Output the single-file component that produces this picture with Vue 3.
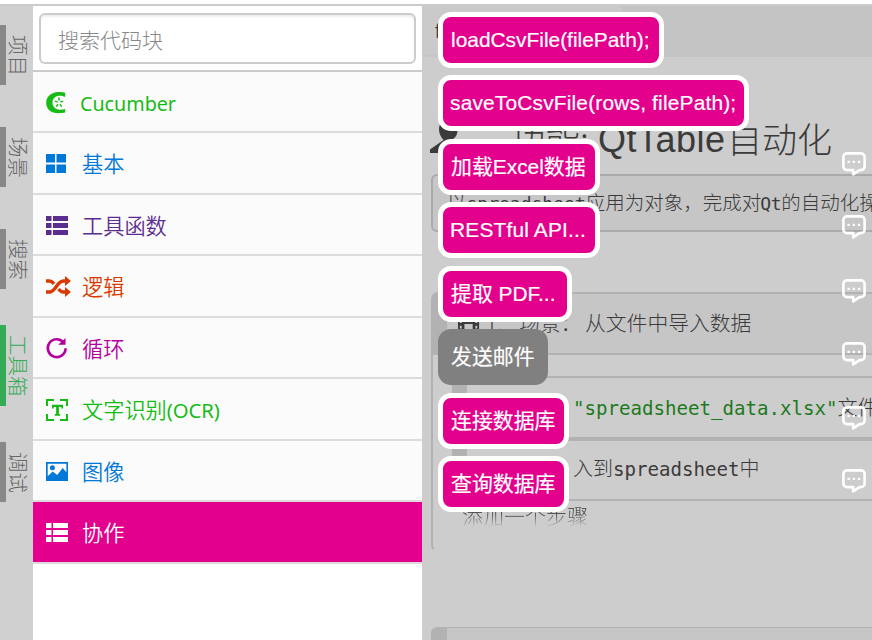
<script setup>
const tabs = [
  { label: '项目', size: 'wide' },
  { label: '场景', size: 'wide' },
  { label: '搜索' },
  { label: '工具箱', active: true },
  { label: '调试' },
]

const categories = [
  { label: 'Cucumber', icon: 'cucumber', color: '#16bb16', latin: true },
  { label: '基本', icon: 'grid', color: '#0078d7' },
  { label: '工具函数', icon: 'list', color: '#5c2d91' },
  { label: '逻辑', icon: 'shuffle', color: '#d83b01' },
  { label: '循环', icon: 'loop', color: '#b4009e' },
  { label: '文字识别', suffix: '(OCR)', icon: 'ocr', color: '#16bb16' },
  { label: '图像', icon: 'image', color: '#0078d7' },
  { label: '协作', icon: 'list', color: '#ffffff', selected: true },
]

const blocks = [
  { label: 'loadCsvFile(filePath);', width: 226 },
  { label: 'saveToCsvFile(rows, filePath);', width: 311, wide: true },
  { label: '加载Excel数据', width: 162, comment: true },
  { label: 'RESTful API...', width: 162, comment: true, wide: true },
  { label: '提取 PDF...', width: 134, comment: true },
  { label: '发送邮件', width: 110, comment: true, disabled: true },
  { label: '连接数据库', width: 131, comment: true },
  { label: '查询数据库', width: 131, comment: true },
]
</script>

<template>
  <div class="page">
    <nav class="rail">
      <div v-for="t in tabs" :key="t.label" class="tab" :class="[{ active: t.active }, t.size]">
        <span>{{ t.label }}</span>
      </div>
    </nav>

    <aside class="toolbox">
      <div class="search"><div class="field">搜索代码块</div></div>
      <div
        v-for="c in categories"
        :key="c.label"
        class="category"
        :class="{ selected: c.selected, latin: c.latin }"
        :style="{ color: c.color }"
      >
        <svg class="icon" viewBox="0 0 26 24" fill="currentColor">
          <template v-if="c.icon === 'cucumber'">
            <path d="M20.200 1.900C18.400 1.100 15.600 1 13.200 1.100 6 1.400 1.200 5.600 1.200 11.800c0 6.700 5 10.400 12 10.400 2.500 0 5.400-.2 7-.6v-3.600c-1.800.6-3.800.9-5.400.7-4.400-.4-7.300-3-7.300-7 0-4.300 3-7 7.300-7 1.700 0 3.800.5 5.400 1.200z" />
            <g fill="none" stroke="currentColor" stroke-width="1.500" stroke-linecap="round">
              <path d="M14 7v1.900M17.700 10.400l-1.800.5M16.300 15.200l-1-1.500M11.700 15.200l1-1.500M10.300 10.400l1.800.5" />
            </g>
          </template>
          <template v-else-if="c.icon === 'grid'">
            <path d="M1 2h9v8.500H1zM11.500 2h9.500v8.500h-9.500zM1 12.500h9V21H1zM11.500 12.500h9.500V21h-9.500z" />
          </template>
          <template v-else-if="c.icon === 'list'">
            <path d="M1 2h5.500v5H1zM8 2h15v5H8zM1 9h5.500v5H1zM8 9h15v5H8zM1 16h5.500v5H1zM8 16h15v5H8z" />
          </template>
          <template v-else-if="c.icon === 'shuffle'">
            <path fill="none" stroke="currentColor" stroke-width="3.400" d="M1 6h3.500c2 0 3 1 4.500 2.800M1 17h3.500c6 0 7.500-11 14-11H21M13.500 14c1.500 2 2.700 3 5 3H21" />
            <path d="M20 1l6 5-6 5zM20 12l6 5-6 5z" />
          </template>
          <template v-else-if="c.icon === 'loop'">
            <path fill="none" stroke="currentColor" stroke-width="2.600" d="M18.300 5.200A8.900 8.900 0 1 0 20.600 11.300" />
            <path d="M20.500 1v6.800h-7.300z" />
          </template>
          <template v-else-if="c.icon === 'ocr'">
            <path fill="none" stroke="currentColor" stroke-width="2" d="M9 2H2v6M15 2h7v6M9 22H2v-6M15 22h7v-6" />
            <path d="M7 6.800h11v3.700h-1.700V9h-2.400v7h1.300v1.700H9.800V16h1.300V9H8.700v1.500H7z" />
          </template>
          <template v-else>
            <path fill-rule="evenodd" d="M1 2h22v19H1zM2.700 3.700v12.500l5-4.700 4.500 3.500 5.500-7 3.700 4.200V3.700z" />
            <circle cx="7.400" cy="7.700" r="2.500" />
          </template>
        </svg>
        <span>{{ c.label }}<b v-if="c.suffix">{{ c.suffix }}</b></span>
      </div>
    </aside>

    <main class="editor">
      <div class="filetabs"><div class="filetab">f</div></div>
      <h1 class="title">
        <svg class="user" viewBox="0 0 30 34"><path fill="#3b3b3b" d="M9 9a9.300 9.300 0 0 1 18.600 0c0 5-1.500 8-4.500 10v2.500l6 3V33H0v-3.500l13.500-9.500C11 17 9 14 9 9z" /></svg>
        <span class="kw">功能:</span><span class="name">QtTable</span><span>自动化</span>
      </h1>
      <div class="description">以<i>spreadsheet</i>应用为对象，完成对<i class="qt">Qt</i>的自动化操作</div>
      <section class="scenario">
        <header>
          <svg class="film" viewBox="0 0 24 24"><path fill="#3b3b3b" fill-rule="evenodd" d="M0 1h23v22H0zM2 3v3h2V3zm0 6v3h2V9zm0 6v3h2v-3zM19 3v3h2V3zm0 6v3h2V9zm0 6v3h2v-3zM7 3v8h9V3zm0 10v8h9v-8z" /></svg>
          <span class="number">1.</span><span class="kind">场景：</span><span>从文件中导入数据</span>
        </header>
        <div class="step"><span class="lead">打开</span><q>"spreadsheet_data.xlsx"</q>文件</div>
        <div class="step second"><span class="lead">数据导</span>入到<i>spreadsheet</i>中</div>
        <div class="add">添加一个步骤</div>
      </section>
      <section class="next"></section>
    </main>

    <div class="flyout">
      <div v-for="b in blocks" :key="b.label" class="entry">
        <div class="block" :class="{ disabled: b.disabled, wide: b.wide }" :style="{ width: b.width + 'px' }">{{ b.label }}</div>
        <svg v-if="b.comment" class="comment" viewBox="0 0 24 24">
          <path fill="none" stroke="#fff" stroke-width="2.600" stroke-linejoin="round" d="M5 1.400h14a3.600 3.600 0 0 1 3.600 3.600v9.500a3.600 3.600 0 0 1-3.600 3.600h-1.500L11.200 22.300v-4.200H5a3.600 3.600 0 0 1-3.600-3.600V5A3.600 3.600 0 0 1 5 1.400z" />
          <path fill="#fff" d="M5.500 8.700h2.300v2.300H5.500zM10.700 8.700H13V11h-2.300zM15.900 8.700h2.300v2.300h-2.300z" />
        </svg>
      </div>
    </div>
  </div>
</template>

<style>
body { background: #fff; overflow: hidden; }
</style>

<style scoped>
.page {
  box-sizing: border-box;
  width: 872px;
  height: 640px;
  border-top: 4px solid #fff;
  display: flex;
  overflow: hidden;
  position: relative;
  background: #fff;
  font-family: "Liberation Sans", "Noto Sans CJK SC", sans-serif;
}
.page > * { box-sizing: border-box; border-top: 2px solid #cbcbcb; flex: none; }
.rail { width: 33px; padding-top: 19px; background: #d0d0d0; }
.tab {
  box-sizing: border-box;
  height: 60px;
  margin-bottom: 36px;
  border-left: 6px solid #888;
  color: #666;
  display: flex;
  align-items: center;
  padding-left: 1px;
  font: 300 20.5px/24px "Noto Sans CJK SC", sans-serif;
}
.tab.wide { margin-bottom: 42px; }
.tab.active { height: 81px; border-color: #35ab57; color: #35ab57; }
.tab span { writing-mode: vertical-rl; text-orientation: sideways; }

.toolbox { width: 389px; background: #fff; }
.search { box-sizing: border-box; height: 66px; padding: 7px 6px 6px; border-bottom: 2px solid #cbcbcb; }
.field {
  box-sizing: border-box;
  height: 51px;
  width: 377px;
  border: 2px solid #ccc;
  border-radius: 6px;
  padding-left: 17px;
  color: #888;
  font: 300 21px/49px "Noto Sans CJK SC", sans-serif;
  box-shadow: inset 0 2px 2px rgba(0, 0, 0, 0.07);
}
.category {
  box-sizing: border-box;
  height: 61px;
  border-bottom: 2px solid #dcdcdc;
  background: #fbfbfb;
  display: flex;
  align-items: center;
  padding-left: 12px;
  gap: 11px;
  font: 350 21.200px/30px "Noto Sans CJK SC", "Noto Sans CJK SC DemiLight", sans-serif;
}
.category:nth-child(odd) { height: 62px; }
.category.selected { background: #e3008c; }
.category.latin { font: 400 19.700px/30px "Noto Sans", sans-serif; gap: 9px; }
.category.latin span { padding-top: 4px; }
.category b { font: 400 20.300px/30px "Noto Sans", sans-serif; letter-spacing: -0.1px; }
.icon { width: 26px; height: 24px; flex: none; margin-top: 2px; }

.editor { width: 450px; background: #cdcdcd; color: #3b3b3b; font-family: "Noto Sans CJK SC", sans-serif; font-weight: 300; white-space: nowrap; overflow: hidden; }
.editor i, .editor q { font-family: "DejaVu Sans Mono", monospace; font-style: normal; font-weight: 400; quotes: none; }
.editor q::before, .editor q::after { content: none; }
.filetabs { height: 51px; background: #c4c4c4; display: flex; }
.filetab { box-sizing: border-box; width: 200px; padding-left: 13px; background: #cacaca; border-bottom: 2px solid #c6c6c6; font: 20px/50px "Liberation Sans", sans-serif; }
.title { box-sizing: border-box; margin: 0; height: 117px; padding: 55px 0 0 8px; display: flex; font-size: 35px; line-height: 52px; font-weight: 300; }
.user { width: 30px; height: 34px; margin: 8px 0 0; flex: none; }
.kw { width: 88px; margin-left: 50px; }
.name { font-family: "Liberation Sans", sans-serif; font-weight: 400; width: 129px; font-size: 36px; line-height: 55px; letter-spacing: 0.500px; }
.description { box-sizing: border-box; height: 58px; margin-left: 9px; width: 500px; border: 2px solid #aaa; border-radius: 6px; background: #c6c6c6; padding-left: 14px; font-size: 19.500px; line-height: 52px; }
.description i { font-size: 18px; }
.description i.qt { letter-spacing: -0.300px; margin-left: -1px; }
.scenario { box-sizing: border-box; height: 260px; width: 500px; margin: 60px 0 0 9px; border: 2px solid #b2b2b2; border-bottom-color: transparent; border-radius: 7px; }
.scenario header { box-sizing: border-box; height: 61px; border-left: 14px solid #b2b2b2; border-bottom: 2px solid #b2b2b2; background: #c6c6c6; display: flex; padding-left: 11px; font-size: 20.800px; line-height: 57px; }
.film { width: 22px; height: 24px; margin-top: 17px; }
.number { width: 33px; margin-left: 6px; }
.kind { width: 66px; }
.step { box-sizing: border-box; height: 63px; margin: 21px 0 0 19px; border-top: 2px solid #b2b2b2; border-bottom: 2px solid #b2b2b2; border-left: 15px solid #b2b2b2; font-size: 20px; line-height: 58px; padding-left: 10px; }
.step.second { margin-top: 0; height: 62px; line-height: 54px; }
.step i, .step q { font-size: 19.100px; }
.step q { color: #1d7a1d; }
.lead { display: inline-block; width: 96px; overflow: hidden; vertical-align: top; height: 58px; }
.add {
  height: 26px;
  margin-left: 29px;
  overflow: hidden;
  font-size: 21px;
  line-height: 28px;
  color: #555;
  -webkit-mask-image: linear-gradient(#000 50%, transparent);
  mask-image: linear-gradient(#000 50%, transparent);
}
.next { box-sizing: border-box; height: 30px; width: 500px; margin: 75px 0 0 9px; border: 1px solid #b2b2b2; border-left-width: 16px; border-radius: 6px; background: #c6c6c6; }

.flyout { position: absolute; left: 438px; top: 8px; width: 434px; display: flex; flex-direction: column; gap: 7.430px; }
.page > .flyout { border-top: 0; }
.entry { display: flex; justify-content: space-between; height: 56px; padding-right: 6px; }
.block {
  box-sizing: border-box;
  height: 56px;
  border: 5px solid #fff;
  border-radius: 13px;
  background: #e3008c;
  color: #fff;
  padding-left: 8px;
  font-size: 20.900px;
  line-height: 45px;
  white-space: nowrap;
  -webkit-text-stroke: 0.2px #fff;
}
.block.wide { padding-left: 7px; letter-spacing: 0.180px; }
.block.disabled { background: #808080; border-color: #808080; }
.comment { width: 24px; height: 24px; margin-top: 13px; }
</style>
